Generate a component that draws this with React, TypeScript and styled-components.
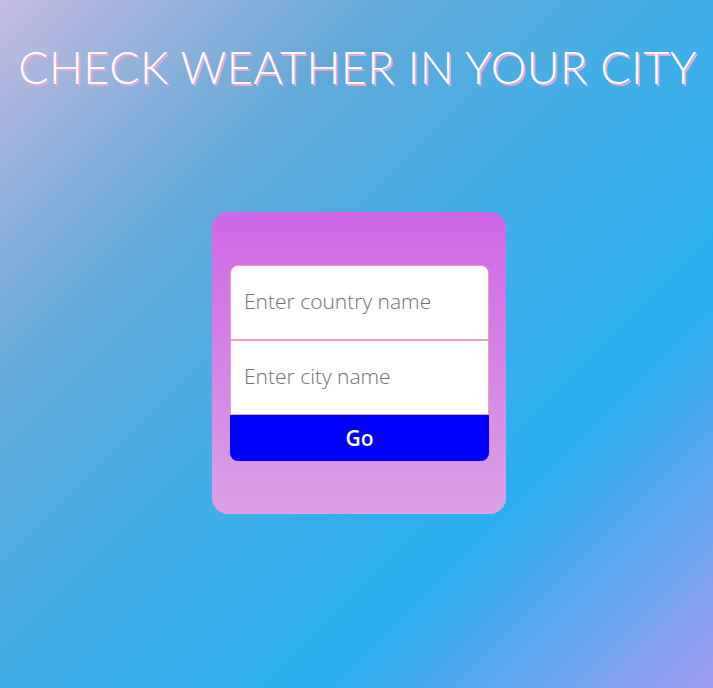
import React from "react";
import styled, { createGlobalStyle } from "styled-components";

const Global = createGlobalStyle`
  html, body { margin: 0; padding: 0; }
  body {
    min-height: 688px;
    background: linear-gradient(135deg, #c6bbe0 0%, #62a9d8 28%, #40aee8 50%, #29aff0 72%, #9e9cf0 100%);
    font-family: "Open Sans", sans-serif;
  }
`;

const Page = styled.div`
  width: 713px;
  height: 688px;
  display: flex;
  flex-direction: column;
  align-items: center;
`;

const Title = styled.h1`
  margin: 44px 0 0 2px;
  font-family: "Lato", sans-serif;
  font-weight: 300;
  font-size: 45px;
  line-height: 46px;
  letter-spacing: 0.4px;
  color: #ffffff;
  text-shadow: 1.5px 1.5px 0 #e8a8d8;
  white-space: nowrap;
`;

const Card = styled.form`
  margin-top: 122px;
  margin-left: 5px;
  width: 294px;
  height: 302px;
  box-sizing: border-box;
  border-radius: 16px;
  background: linear-gradient(180deg, #d066e6 0%, #dba1e4 100%);
  padding: 53px 17px 0 18px;
  display: flex;
  flex-direction: column;
`;

const Input = styled.input<{ $first?: boolean }>`
  height: 75px;
  box-sizing: border-box;
  border: 1px solid #e8a0bc;
  border-radius: ${(p) => (p.$first ? "8px 8px 0 0" : "0")};
  background: #ffffff;
  padding: 0 13px 3px;
  font-family: "Open Sans", sans-serif;
  font-weight: 300;
  font-size: 21px;
  color: #333;
  outline: none;
  &::placeholder { color: #707070; }
`;

const Button = styled.button`
  height: 46px;
  border: none;
  border-radius: 0 0 8px 8px;
  background: #0000ff;
  color: #ffffff;
  font-family: "Open Sans", sans-serif;
  font-weight: 600;
  font-size: 21px;
  cursor: pointer;
`;

export default function App() {
  return (
    <>
      <Global />
      <Page>
        <Title>CHECK WEATHER IN YOUR CITY</Title>
        <Card onSubmit={(e) => e.preventDefault()}>
          <Input $first placeholder="Enter country name" />
          <Input placeholder="Enter city name" />
          <Button type="submit">Go</Button>
        </Card>
      </Page>
    </>
  );
}
